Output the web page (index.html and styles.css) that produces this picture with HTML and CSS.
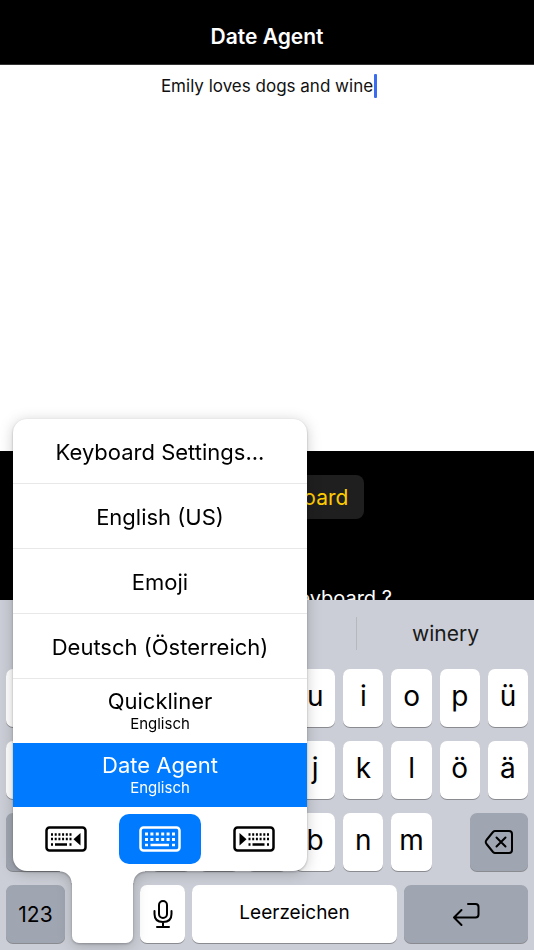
FILE: index.html
```html
<!DOCTYPE html>
<html lang="de">
<head>
    <meta charset="UTF-8">
    <meta name="viewport" content="width=device-width, initial-scale=1.0">
    <title>Date Agent</title>
    <link rel="stylesheet" href="styles.css">
</head>
<body>

    <header class="header">
        <h1>Date Agent</h1>
    </header>

    <main class="main">
        <div class="editor">
            <textarea id="message" aria-label="Message" spellcheck="false">Emily loves dogs and wine</textarea>
            <span class="caret"></span>
        </div>
        <div class="panel">
            <button type="button" class="panel-button">Select Keyboard</button>
            <p class="panel-hint">No Date Agent Keyboard ?</p>
        </div>
    </main>

    <section class="keyboard">
        <div class="suggestions">
            <button type="button">wine</button>
            <button type="button">wines</button>
            <button type="button">winery</button>
        </div>

        <div class="rows">
            <div class="row letters">
                <button type="button" class="key">q</button>
                <button type="button" class="key">w</button>
                <button type="button" class="key">e</button>
                <button type="button" class="key">r</button>
                <button type="button" class="key">t</button>
                <button type="button" class="key">z</button>
                <button type="button" class="key">u</button>
                <button type="button" class="key">i</button>
                <button type="button" class="key">o</button>
                <button type="button" class="key">p</button>
                <button type="button" class="key">ü</button>
            </div>
            <div class="row letters">
                <button type="button" class="key">a</button>
                <button type="button" class="key">s</button>
                <button type="button" class="key">d</button>
                <button type="button" class="key">f</button>
                <button type="button" class="key">g</button>
                <button type="button" class="key">h</button>
                <button type="button" class="key">j</button>
                <button type="button" class="key">k</button>
                <button type="button" class="key">l</button>
                <button type="button" class="key">ö</button>
                <button type="button" class="key">ä</button>
            </div>
            <div class="row third">
                <button type="button" class="key dark side" aria-label="Shift">
                    <svg width="28" height="28" viewBox="0 0 28 28"><path d="M14 4 L25 15 H19 V24 H9 V15 H3 Z"/></svg>
                </button>
                <div class="letters seven">
                    <button type="button" class="key">y</button>
                    <button type="button" class="key">x</button>
                    <button type="button" class="key">c</button>
                    <button type="button" class="key">v</button>
                    <button type="button" class="key">b</button>
                    <button type="button" class="key">n</button>
                    <button type="button" class="key">m</button>
                </div>
                <button type="button" class="key dark side" aria-label="Löschen">
                    <svg width="30" height="26" viewBox="0 0 30 26"><path d="M11 2 H25 Q28 2 28 5 V21 Q28 24 25 24 H11 Q10 24 9 23 L2.5 15 Q1 13 2.5 11 L9 3 Q10 2 11 2 Z"/><path d="M12.5 8.500 L21.500 17.500 M21.500 8.500 L12.500 17.500"/></svg>
                </button>
            </div>
            <div class="row bottom">
                <button type="button" class="key dark numbers">123</button>
                <div class="globe">
                    <button type="button" class="globe-key" aria-label="Tastatur wechseln"></button>
                    <div class="menu">
                        <button type="button" class="item">Keyboard Settings...</button>
                        <button type="button" class="item">English (US)</button>
                        <button type="button" class="item">Emoji</button>
                        <button type="button" class="item">Deutsch (Österreich)</button>
                        <button type="button" class="item double">Quickliner<small>Englisch</small></button>
                        <button type="button" class="item double active">Date Agent<small>Englisch</small></button>
                        <div class="docks">
                            <button type="button" class="dock" aria-label="Links">
                                <svg width="42" height="26" viewBox="0 0 42 26">
                                    <rect x="1.500" y="1.500" width="39" height="23" rx="3"/>
                                    <path class="dots" d="M6 8.500 H27 M6 13 H27"/>
                                    <path d="M6 18.500 H8 M10 18.500 H22 M24.500 18.500 H26.500"/>
                                    <path class="arrow" d="M35.500 7 V19.500 L28.500 13.200 Z"/>
                                </svg>
                            </button>
                            <button type="button" class="dock selected" aria-label="Mitte">
                                <svg width="42" height="26" viewBox="0 0 42 26">
                                    <rect x="1.500" y="1.500" width="39" height="23" rx="3"/>
                                    <path class="dots wide" d="M6 8 H36 M6 13.500 H36"/>
                                    <path d="M6 19 H9 M11.500 19 H30 M33 19 H36"/>
                                </svg>
                            </button>
                            <button type="button" class="dock" aria-label="Rechts">
                                <svg width="42" height="26" viewBox="0 0 42 26">
                                    <rect x="1.500" y="1.500" width="39" height="23" rx="3"/>
                                    <path class="dots" d="M15.500 8.500 H36.500 M15.500 13 H36.500"/>
                                    <path d="M15.500 18.500 H17.500 M19.500 18.500 H31.500 M34 18.500 H36"/>
                                    <path class="arrow" d="M6.500 7 V19.500 L13.500 13.200 Z"/>
                                </svg>
                            </button>
                        </div>
                    </div>
                </div>
                <button type="button" class="key mic" aria-label="Diktieren">
                    <svg width="20" height="28" viewBox="0 0 20 28"><rect x="6" y="1" width="8" height="17" rx="4"/><path d="M1.500 11 V14 Q1.500 22 10 22 Q18.500 22 18.500 14 V11 M10 22 V27 M4 27 H16"/></svg>
                </button>
                <button type="button" class="key space">Leerzeichen</button>
                <button type="button" class="key dark return" aria-label="Return">
                    <svg width="28" height="25" viewBox="0 0 28 25"><path d="M16 2 H23.500 Q26.500 2 26.500 5 V12.500 Q26.500 15.500 23.500 15.500 H2 M9.500 8 L2 15.500 L9.500 23"/></svg>
                </button>
            </div>
        </div>
    </section>

</body>
</html>
```

FILE: styles.css
```css
* {
    box-sizing: border-box;
}

body {
    margin: 0;
    min-height: 100vh;
    display: flex;
    flex-direction: column;
    overflow-x: hidden;
    font-family: Inter, "Liberation Sans", sans-serif;
    background-color: #000;
}

button {
    margin: 0;
    padding: 0;
    border: none;
    background: none;
    color: #000;
    font-family: inherit;
    cursor: pointer;
}

svg {
    display: block;
    fill: none;
    stroke: #000;
    stroke-width: 2;
    stroke-linecap: round;
    stroke-linejoin: round;
}

.header {
    height: 65px;
    padding-top: 24px;
    border-bottom: 1px solid #333;
    text-align: center;
}

.header h1 {
    margin: 0;
    font-size: 21px;
    line-height: 26px;
    font-weight: 600;
    color: #fff;
}

.main {
    flex: 1;
    display: flex;
    flex-direction: column;
}

.editor {
    position: relative;
    flex: 1;
    display: flex;
    background-color: #fff;
}

.editor textarea {
    width: 100%;
    padding: 9px 0 0;
    border: none;
    outline: none;
    resize: none;
    background: none;
    text-align: center;
    font-family: inherit;
    font-size: 17px;
    line-height: 24px;
    color: #111;
}

.caret {
    position: absolute;
    top: 9px;
    left: calc(50% + 107px);
    width: 3px;
    height: 24px;
    border-radius: 1px;
    background-color: #3b6cf0;
}

.panel {
    height: 149px;
    padding-top: 24px;
    overflow: hidden;
    text-align: center;
}

.panel-button {
    height: 44px;
    padding: 0 16px;
    border-radius: 8px;
    background-color: #1f1f1f;
    font-size: 21px;
    color: #ffcc00;
}

.panel-hint {
    margin: 66px 0 0;
    font-size: 20px;
    line-height: 26px;
    color: #fff;
}

.keyboard {
    background-color: #cbced6;
}

.suggestions {
    height: 69px;
    padding: 17px 0 19px;
    display: grid;
    grid-template-columns: repeat(3, 1fr);
}

.suggestions button {
    font-size: 21px;
    color: #1a1a1a;
}

.suggestions button + button {
    border-left: 1px solid #b5b8bf;
}

.rows {
    display: grid;
    gap: 14px;
    padding: 0 6px 7px;
}

.row {
    height: 58px;
}

.letters {
    display: grid;
    grid-template-columns: repeat(11, 1fr);
    gap: 8px;
}

.key {
    display: flex;
    justify-content: center;
    align-items: center;
    height: 58px;
    padding-bottom: 5px;
    border-radius: 7px;
    background-color: #fff;
    box-shadow: 0 1px 0 #898b90;
    font-size: 28px;
    font-weight: 400;
}

.dark {
    padding-bottom: 0;
    background-color: #a0a6b1;
}

.third {
    display: flex;
    justify-content: space-between;
}

.seven {
    width: calc((100% - 80px) / 11 * 7 + 48px);
    grid-template-columns: repeat(7, 1fr);
}

.side {
    width: 58px;
}

.bottom {
    display: flex;
    gap: 7px;
}

.numbers {
    width: 59px;
    font-size: 21px;
}

.mic {
    width: 45px;
    padding-bottom: 0;
}

.space {
    flex: 1;
    padding-bottom: 4px;
    font-size: 19px;
}

.return {
    width: 124px;
}

/* language menu, joined to the globe key */
.globe {
    position: relative;
    z-index: 1;
    width: 61px;
    filter: drop-shadow(0 1px 1px rgba(0, 0, 0, 0.25)) drop-shadow(0 2px 7px rgba(0, 0, 0, 0.2));
}

.globe-key {
    position: absolute;
    top: -14px;
    bottom: 0;
    width: 100%;
    border-radius: 0 0 7px 7px;
    background-color: #fff;
}

.globe-key::before,
.globe-key::after {
    content: "";
    position: absolute;
    top: 0;
    width: 12px;
    height: 12px;
}

.globe-key::before {
    right: 100%;
    background: radial-gradient(circle at 0 100%, transparent 11px, #fff 12px);
}

.globe-key::after {
    left: 100%;
    background: radial-gradient(circle at 100% 100%, transparent 11px, #fff 12px);
}

.menu {
    position: absolute;
    left: -59px;
    bottom: 72px;
    width: 294px;
    border-radius: 14px;
    overflow: hidden;
    background-color: #fff;
}

.item {
    display: flex;
    flex-direction: column;
    justify-content: center;
    align-items: center;
    width: 100%;
    height: 65px;
    padding-top: 2px;
    border-bottom: 1px solid #e8e8e8;
    font-size: 22px;
    line-height: 28px;
}

.double {
    height: 64px;
    padding: 0 0 3px;
    border-bottom: none;
}

.item small {
    font-size: 15px;
    line-height: 18px;
}

.active {
    background-color: #007aff;
    color: #fff;
}

.docks {
    display: grid;
    grid-template-columns: repeat(3, 82px);
    justify-content: center;
    align-content: center;
    gap: 12px;
    height: 64px;
}

.dock {
    display: flex;
    justify-content: center;
    align-items: center;
    height: 50px;
    border-radius: 10px;
}

.selected {
    background-color: #007aff;
}

.dock svg {
    stroke-linecap: butt;
}

.dock rect,
.dock path {
    stroke-width: 2.5;
}

.dock .dots {
    stroke-dasharray: 2 1.7;
}

.dock .wide {
    stroke-width: 3;
    stroke-dasharray: 3 2.4;
}

.dock .arrow {
    fill: #000;
    stroke: none;
}

.selected svg {
    stroke: #fff;
}
```
